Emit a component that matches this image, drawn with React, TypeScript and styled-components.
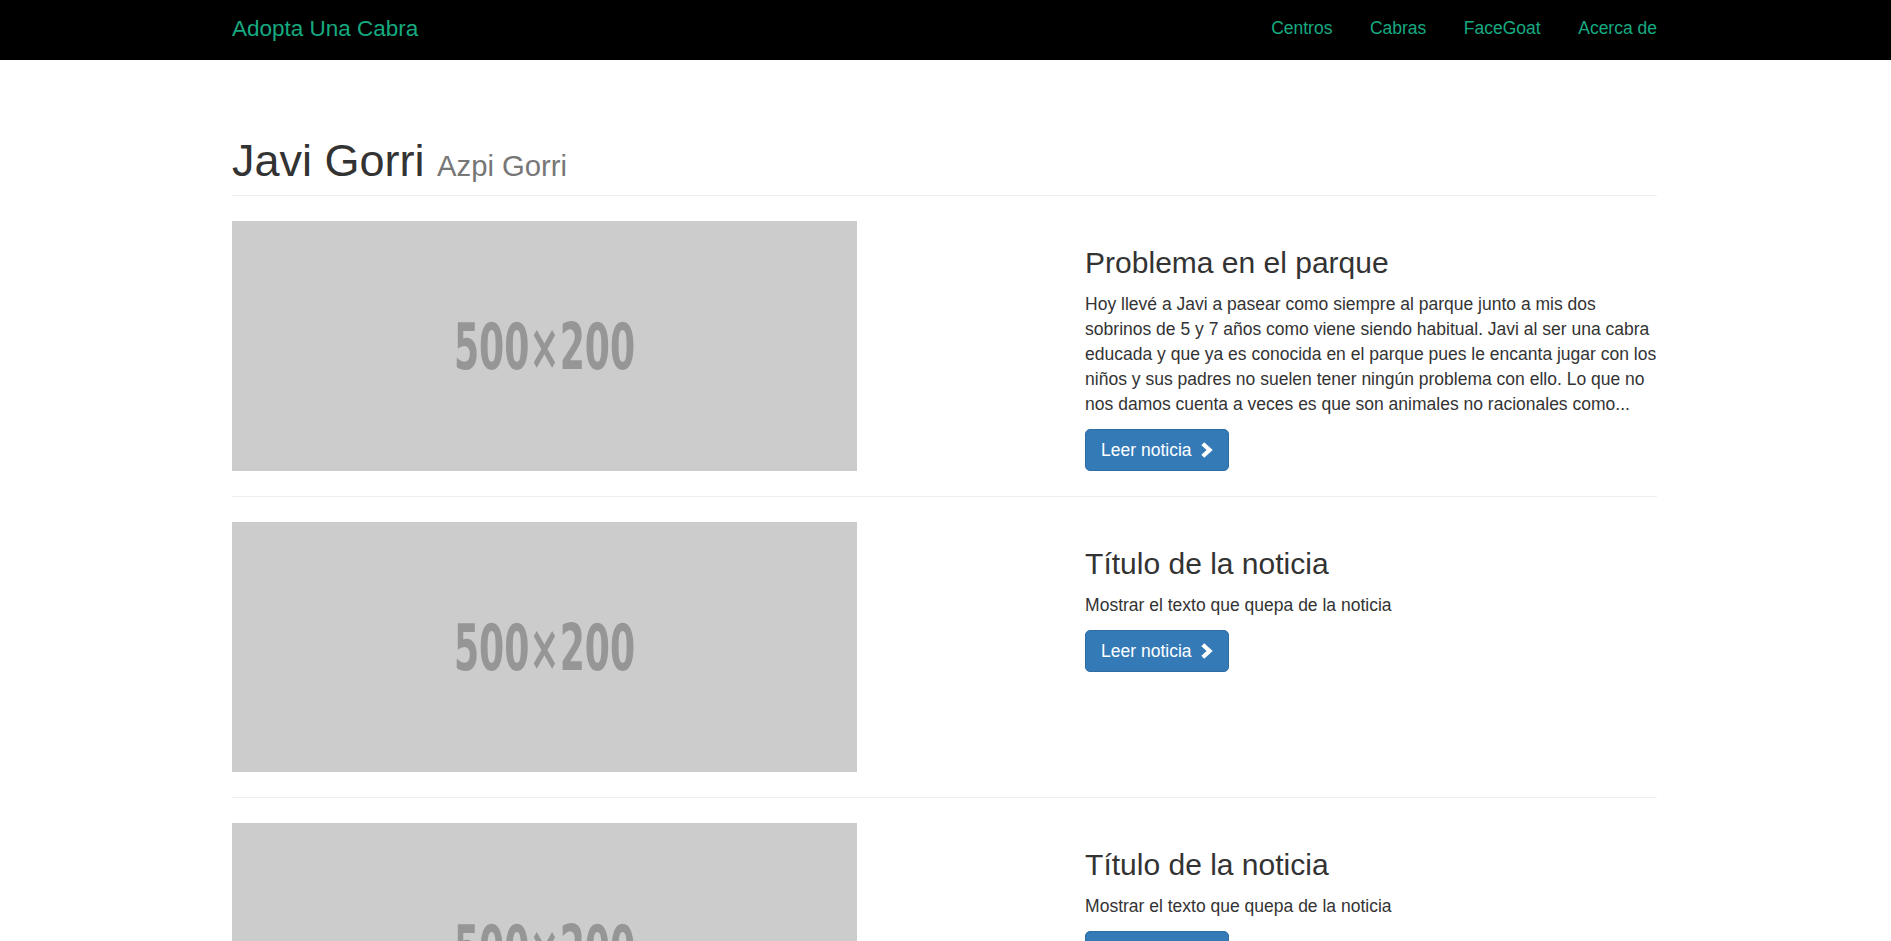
import React from "react";
import styled, { createGlobalStyle } from "styled-components";

const GlobalStyle = createGlobalStyle`
  * { box-sizing: border-box; }
  html, body { margin: 0; padding: 0; }
  body {
    font-family: "Liberation Sans", Arial, Helvetica, sans-serif;
    font-size: 17.5px;
    line-height: 25px;
    color: #333;
    background: #fff;
  }
`;

const ACCENT = "#16aa80";

const Navbar = styled.nav`
  background: #000;
  height: 60px;
`;

const Container = styled.div`
  width: 1425px;
  margin-left: calc(50% - 713.5px);
`;

const NavInner = styled(Container)`
  display: flex;
  justify-content: space-between;
  align-items: flex-start;
`;

const Brand = styled.a`
  display: block;
  padding-top: 16px;
  font-size: 22.5px;
  line-height: 25px;
  color: ${ACCENT};
  text-decoration: none;
`;

const NavList = styled.ul`
  display: flex;
  list-style: none;
  margin: 0 -18.75px 0 0;
  padding: 0;
`;

const NavLink = styled.a`
  display: block;
  padding: 16px 18.75px 0;
  font-size: 17.5px;
  line-height: 25px;
  color: ${ACCENT};
  text-decoration: none;
`;

const PageHeader = styled.header`
  margin: 75.7px 0 25px;
  padding-bottom: 10px;
  border-bottom: 1px solid #eee;
`;

const Title = styled.h1`
  margin: 0;
  font-size: 45px;
  line-height: 49.5px;
  font-weight: 500;
  color: #333;
`;

const Subtitle = styled.small`
  font-size: 29.25px;
  line-height: 1;
  font-weight: 400;
  color: #777;
`;

const ArticleRow = styled.article`
  display: grid;
  grid-template-columns: 815.6px 1fr;
  column-gap: 37.5px;
  align-items: start;
`;

const Thumb = styled.svg`
  display: block;
  width: 625px;
  height: 250px;
`;

const Divider = styled.hr`
  margin: 25px 0;
  border: 0;
  border-top: 1px solid #eee;
  height: 0;
`;

const ArticleBody = styled.div`
  min-width: 0;
`;

const ArticleTitle = styled.h3`
  margin: 25px 0 12.5px;
  font-size: 30px;
  line-height: 33px;
  font-weight: 500;
  color: #333;
`;

const Excerpt = styled.p`
  margin: 0 0 12.5px;
`;

const ReadButton = styled.a`
  display: inline-flex;
  align-items: center;
  padding: 7.5px 15px;
  font-size: 17.5px;
  line-height: 25px;
  color: #fff;
  background: #337ab7;
  border: 1.25px solid #2e6da4;
  border-radius: 5px;
  text-decoration: none;
  cursor: pointer;
`;

const Chevron = styled.svg`
  margin-left: 8px;
  width: 13px;
  height: 16px;
  flex: none;
`;

const Placeholder = () => (
  <Thumb viewBox="0 0 500 200" preserveAspectRatio="none">
    <rect width="500" height="200" fill="#cccccc" />
    <text
      x="250"
      y="118.4"
      textAnchor="middle"
      textLength="145"
      lengthAdjust="spacingAndGlyphs"
      fontFamily="'Liberation Sans Narrow', 'DejaVu Sans Condensed', 'Liberation Sans', sans-serif"
      fontSize="51"
      fontWeight="bold"
      fill="#969696"
    >
      500×200
    </text>
  </Thumb>
);

const articles = [
  {
    title: "Problema en el parque",
    text: "Hoy llevé a Javi a pasear como siempre al parque junto a mis dos sobrinos de 5 y 7 años como viene siendo habitual. Javi al ser una cabra educada y que ya es conocida en el parque pues le encanta jugar con los niños y sus padres no suelen tener ningún problema con ello. Lo que no nos damos cuenta a veces es que son animales no racionales como...",
  },
  { title: "Título de la noticia", text: "Mostrar el texto que quepa de la noticia" },
  { title: "Título de la noticia", text: "Mostrar el texto que quepa de la noticia" },
];

const navItems = ["Centros", "Cabras", "FaceGoat", "Acerca de"];

export default function App() {
  return (
    <>
      <GlobalStyle />
      <Navbar>
        <NavInner>
          <Brand href="#">Adopta Una Cabra</Brand>
          <NavList>
            {navItems.map((item) => (
              <li key={item}>
                <NavLink href="#">{item}</NavLink>
              </li>
            ))}
          </NavList>
        </NavInner>
      </Navbar>
      <Container>
        <PageHeader>
          <Title>
            Javi Gorri <Subtitle>Azpi Gorri</Subtitle>
          </Title>
        </PageHeader>
        {articles.map((a, i) => (
          <React.Fragment key={i}>
            {i > 0 && <Divider />}
            <ArticleRow>
              <Placeholder />
              <ArticleBody>
                <ArticleTitle>{a.title}</ArticleTitle>
                <Excerpt>{a.text}</Excerpt>
                <ReadButton href="#">
                  Leer noticia
                  <Chevron viewBox="0 0 13 16">
                    <polyline
                      points="2.8,1.8 9.6,8 2.8,14.2"
                      fill="none"
                      stroke="#fff"
                      strokeWidth="4.2"
                      strokeLinejoin="miter"
                    />
                  </Chevron>
                </ReadButton>
              </ArticleBody>
            </ArticleRow>
          </React.Fragment>
        ))}
      </Container>
    </>
  );
}
